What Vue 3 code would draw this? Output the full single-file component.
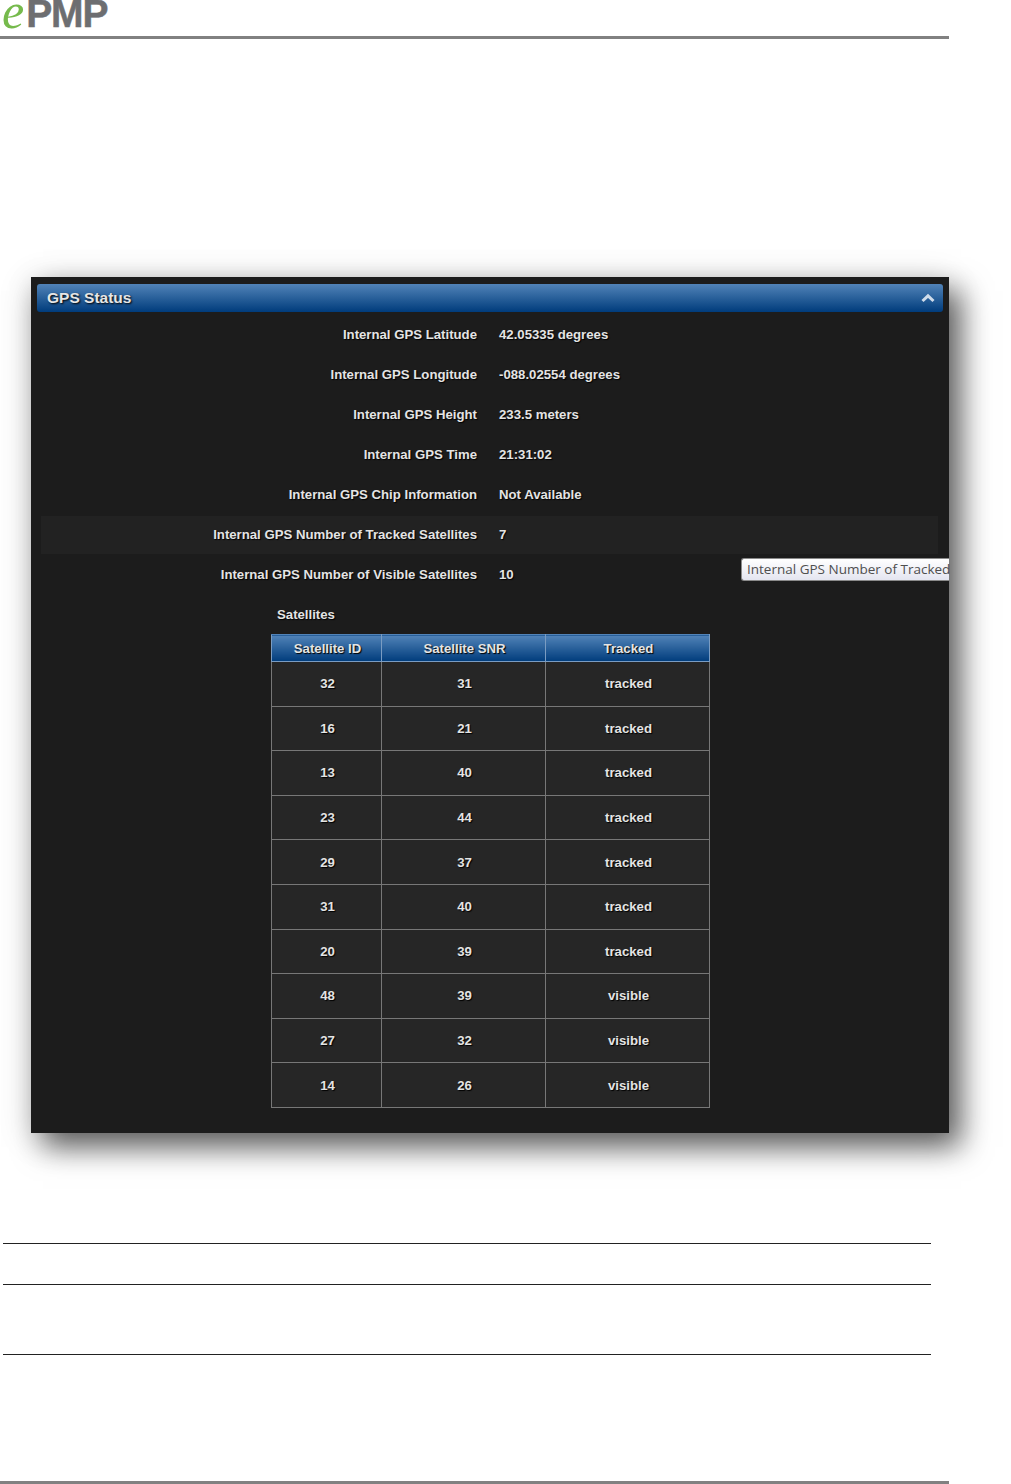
<script setup>
const fields = [
  ['Internal GPS Latitude', '42.05335 degrees'],
  ['Internal GPS Longitude', '-088.02554 degrees'],
  ['Internal GPS Height', '233.5 meters'],
  ['Internal GPS Time', '21:31:02'],
  ['Internal GPS Chip Information', 'Not Available'],
  ['Internal GPS Number of Tracked Satellites', '7'],
  ['Internal GPS Number of Visible Satellites', '10'],
]
const sats = [
  [32, 31, 'tracked'], [16, 21, 'tracked'], [13, 40, 'tracked'], [23, 44, 'tracked'], [29, 37, 'tracked'],
  [31, 40, 'tracked'], [20, 39, 'tracked'], [48, 39, 'visible'], [27, 32, 'visible'], [14, 26, 'visible'],
]
</script>

<template>
  <div class="page">
    <header class="top">
      <div class="logo"><span class="e">e</span><span class="pmp">PMP</span></div>
    </header>

    <section class="panel">
      <div class="bar">
        <span class="bar-title">GPS Status</span>
        <svg class="chev" width="14" height="10" viewBox="0 0 14 10"><path d="M1.5 8 L7 2.8 L12.5 8" fill="none" stroke="#cfdcea" stroke-width="3"/></svg>
      </div>
      <div class="fields">
        <div v-for="(f, i) in fields" :key="f[0]" class="row" :class="{ hot: i === 5 }">
          <span class="lab">{{ f[0] }}</span>
          <span class="val">{{ f[1] }}</span>
        </div>
      </div>
      <div class="sat-title">Satellites</div>
      <table class="sats">
        <thead>
          <tr><th class="c1">Satellite ID</th><th class="c2">Satellite SNR</th><th class="c3">Tracked</th></tr>
        </thead>
        <tbody>
          <tr v-for="(s, i) in sats" :key="i">
            <td>{{ s[0] }}</td><td>{{ s[1] }}</td><td>{{ s[2] }}</td>
          </tr>
        </tbody>
      </table>
      <div class="tip"><span>Internal GPS Number of Tracked</span></div>
    </section>

    <div class="lines">
      <div class="ln l1"></div>
      <div class="ln l2"></div>
      <div class="ln l3"></div>
    </div>
    <div class="foot"></div>
  </div>
</template>

<style>
html, body { background: #fff; }
</style>

<style scoped>
.page {
  width: 1011px;
  height: 1484px;
  overflow: hidden;
  background: #fff;
  font-family: "Liberation Sans", Arial, sans-serif;
  display: flex;
  flex-direction: column;
}
.top {
  width: 949px;
  height: 39px;
  box-sizing: border-box;
  border-bottom: 3px solid #818181;
  flex: none;
}
.logo {
  height: 36px;
  display: flex;
  align-items: flex-start;
  padding-left: 2px;
}
.e {
  font-family: "Liberation Serif", serif;
  font-style: italic;
  font-size: 50px;
  color: #76ba4c;
  line-height: 22px;
  margin-right: 2px;
}
.pmp {
  font-family: "Liberation Sans", sans-serif;
  font-weight: 700;
  font-size: 39px;
  line-height: 27px;
  color: #6d6e71;
  letter-spacing: -1.1px;
  -webkit-text-stroke: 0.5px #6d6e71;
}
.panel {
  position: relative;
  flex: none;
  width: 918px;
  height: 856px;
  margin: 238px 0 0 31px;
  box-sizing: border-box;
  padding: 7px 6px 0;
  background: #1c1c1c;
  box-shadow: 12px 14px 28px rgba(0, 0, 0, 0.6), 0 5px 32px rgba(0, 0, 0, 0.16);
}
.bar {
  height: 28px;
  border-radius: 3px;
  background: linear-gradient(#5183b8, #003c7c);
  display: flex;
  align-items: center;
  justify-content: space-between;
  padding: 0 8px 0 10px;
}
.bar-title {
  color: #e6e6e6;
  font-weight: 700;
  font-size: 15.5px;
  text-shadow: 1px 1px 2px #000;
}
.fields {
  margin-top: 3px;
  padding: 0 5px 0 4px;
}
.row {
  height: 40px;
  box-sizing: border-box;
  padding-bottom: 1px;
  display: grid;
  grid-template-columns: 436px 1fr;
  column-gap: 22px;
  align-items: center;
  font-size: 13.2px;
  font-weight: 700;
  color: #e4e4e4;
  text-shadow: 1px 1px 1px #000;
}
.row.hot {
  background: #222;
  height: 38px;
  margin: 1px 0;
}
.lab { text-align: right; }
.sat-title {
  margin: 11px 0 0 240px;
  height: 18px;
  line-height: 18px;
  font-size: 13.2px;
  font-weight: 700;
  color: #e4e4e4;
  text-shadow: 1px 1px 1px #000;
}
.sats {
  margin: 10px 0 0 234px;
  border-collapse: collapse;
  table-layout: fixed;
  width: 439px;
  font-size: 13.2px;
  font-weight: 700;
  color: #e4e4e4;
  text-shadow: 1px 1px 1px #000;
}
.c1 { width: 110px; }
.c2 { width: 164px; }
.c3 { width: 164px; }
.sats th {
  height: 27px;
  padding: 1px 0 0 2px;
  font-weight: 700;
  background: linear-gradient(#5183b8, #003c7c);
  border: 1px solid #7a9cc2;
  border-top-color: #5183b8;
  box-sizing: border-box;
}
.sats td {
  height: 44.6px;
  padding: 0 0 0 2px;
  text-align: center;
  box-sizing: border-box;
  background: #262626;
  border: 1px solid #777;
}
.tip {
  position: absolute;
  left: 710px;
  top: 281px;
  width: 208px;
  height: 23px;
  box-sizing: border-box;
  padding-left: 5px;
  border: 1px solid #8a8a8a;
  border-right: 0;
  border-radius: 3px 0 0 3px;
  background: linear-gradient(#fff, #e4e5f0);
  color: #4f4f4f;
  font-family: "Open Sans", sans-serif;
  font-size: 13.5px;
  line-height: 21px;
  white-space: nowrap;
}
.lines {
  flex: none;
  margin: 110px 0 0 3px;
  width: 928px;
}
.ln { height: 1px; background: #222; }
.l2 { margin-top: 40px; }
.l3 { margin-top: 69px; }
.foot {
  flex: none;
  margin-top: 126px;
  width: 949px;
  height: 3px;
  background: #818181;
}
</style>
